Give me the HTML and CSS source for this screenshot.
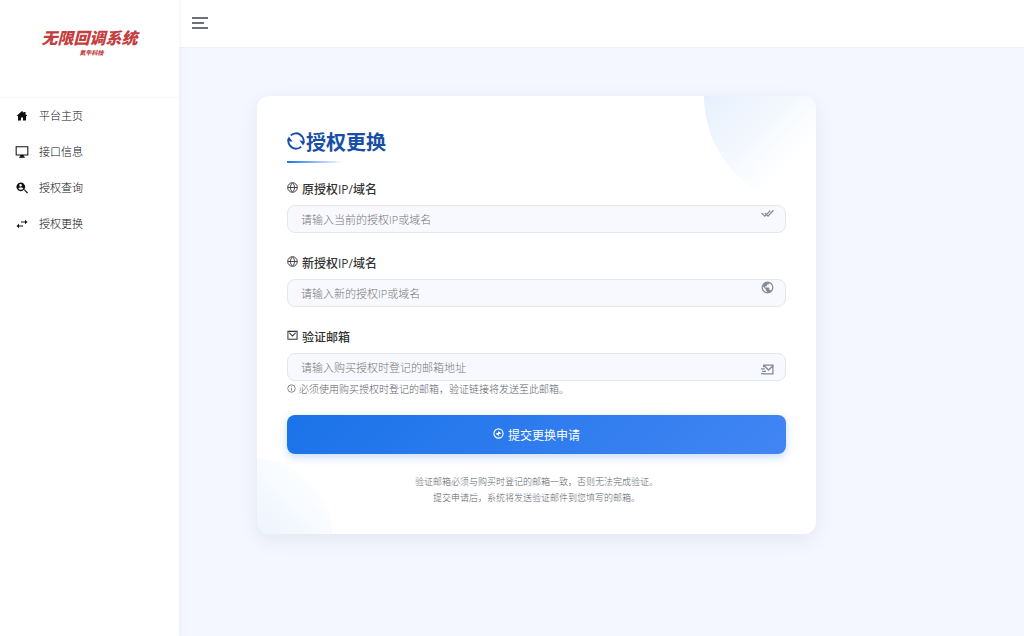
FILE: index.html
```html
<!DOCTYPE html>
<html lang="zh-CN">
<head>
<meta charset="utf-8">
<meta name="viewport" content="width=device-width, initial-scale=1">
<title>授权更换</title>
<link rel="stylesheet" href="styles.css">
</head>
<body>
<div class="app">
  <aside class="sidebar">
    <div class="brand">
      <span class="brand-name">无限回调系统</span>
      <span class="brand-sub">氦午科技</span>
    </div>
    <nav class="menu">
      <a class="menu-item" href="#home"><svg class="menu-icon" viewBox="0 0 24 24"><path fill="currentColor" d="M12 2 1 12h3v9h6v-6h4v6h6v-9h3L19 8.300V4h-3v1.600z"/></svg>平台主页</a>
      <a class="menu-item" href="#api"><svg class="menu-icon wide" viewBox="0 0 24 24"><path fill="none" stroke="currentColor" stroke-width="1.800" d="M2 3h20v14H2zM7 21h10"/><path fill="currentColor" d="M9 17h6v4H9z"/></svg>接口信息</a>
      <a class="menu-item" href="#query"><svg class="menu-icon" viewBox="1 1 21 21"><path fill="currentColor" fill-rule="evenodd" d="M9.500 2a7.500 7.500 0 0 1 6.100 11.800l.5.600h.8L22 19.500 20.500 21l-5.100-5v-.8l-.6-.6A7.500 7.500 0 1 1 9.500 2zm0 2.500A2.300 2.300 0 1 0 9.500 9a2.300 2.300 0 0 0 0-4.500zm0 6c-2 0-3.500.7-4.300 1.800a5.300 5.300 0 0 0 8.600 0c-.8-1.100-2.300-1.800-4.300-1.800z"/></svg>授权查询</a>
      <a class="menu-item" href="#change"><svg class="menu-icon" viewBox="0 0 24 24"><path fill="currentColor" d="M23 8l-5-4.500V7h-8v2h8v3.500zM1 16l5 4.500V17h8v-2H6v-3.500z"/></svg>授权更换</a>
    </nav>
  </aside>
  <div class="page">
    <header class="topbar">
      <button class="toggle" type="button" aria-label="切换菜单"><svg class="toggle-icon" viewBox="0 0 16 12"><path fill="none" stroke="currentColor" stroke-width="1.300" d="M0 1h16M0 6h12M0 11h16"/></svg></button>
    </header>
    <main class="content">
      <form class="card">
        <h1 class="title"><svg class="title-icon" viewBox="0 0 24 24"><path fill="none" stroke="currentColor" stroke-width="2.600" d="M5 4.500A10.200 10.200 0 0 1 21.500 15.500M19 19.500A10.200 10.200 0 0 1 2.500 8.500"/><path fill="currentColor" d="M16.500 11l7.500 1.500-2.500 5.500zM7.500 13L0 11.500 2.500 6z"/></svg>授权更换</h1>
        <div class="field">
          <label class="label" for="old"><svg class="label-icon" viewBox="0 0 24 24"><path fill="none" stroke="currentColor" stroke-width="2" d="M12 1.500a10.500 10.500 0 1 0 0 21 10.500 10.500 0 0 0 0-21zM12 2c-6 5-6 15 0 20M12 2c6 5 6 15 0 20M2 12h20"/></svg>原授权IP/域名</label>
          <div class="control">
            <input class="input" id="old" type="text" placeholder="请输入当前的授权IP或域名">
            <svg class="input-icon raised" viewBox="0 0 24 24"><path fill="none" stroke="currentColor" stroke-width="2.200" d="M1 11l6 6L17 7M7 11l6 6L23 6"/></svg>
          </div>
        </div>
        <div class="field">
          <label class="label" for="new"><svg class="label-icon" viewBox="0 0 24 24"><path fill="none" stroke="currentColor" stroke-width="2" d="M12 1.500a10.500 10.500 0 1 0 0 21 10.500 10.500 0 0 0 0-21zM12 2c-6 5-6 15 0 20M12 2c6 5 6 15 0 20M2 12h20"/></svg>新授权IP/域名</label>
          <div class="control">
            <input class="input" id="new" type="text" placeholder="请输入新的授权IP或域名">
            <svg class="input-icon raised" viewBox="1 1 22 22"><circle cx="12" cy="12" r="9" fill="none" stroke="currentColor" stroke-width="2"/><path fill="currentColor" d="M15 3v2a2 2 0 0 1-2 2h-2v2a1 1 0 0 1-1 1H8v2h6a1 1 0 0 1 1 1v3h1a2 2 0 0 1 1.900 1.400L16 20l-5 1v-3a2 2 0 0 1-2-2v-1l-5-5 3-5 5-2z"/></svg>
          </div>
        </div>
        <div class="field">
          <label class="label" for="mail"><svg class="label-icon" viewBox="0 0 24 24"><path fill="none" stroke="currentColor" stroke-width="2.200" d="M2 3h20v17H2zM5 6l7 7 7-7"/></svg>验证邮箱</label>
          <div class="control">
            <input class="input" id="mail" type="email" placeholder="请输入购买授权时登记的邮箱地址">
            <svg class="input-icon lowered" viewBox="0 0 24 24"><path fill="none" stroke="currentColor" stroke-width="2.400" d="M5 8V4h17v16H5v-1M6 5l8 8 8-8M0 11h7M2 15.500h7M0 19.500h6"/></svg>
          </div>
          <p class="hint"><svg class="hint-icon" viewBox="0 0 24 24"><circle cx="12" cy="12" r="10" fill="none" stroke="currentColor" stroke-width="2"/><path stroke="currentColor" stroke-width="2" d="M12 6v2M12 10v8"/></svg>必须使用购买授权时登记的邮箱，验证链接将发送至此邮箱。</p>
        </div>
        <button class="submit" type="submit"><svg class="submit-icon" viewBox="0 0 24 24"><circle cx="12" cy="12" r="10" fill="none" stroke="currentColor" stroke-width="2.400"/><path fill="currentColor" d="M12 5v3h1a4 4 0 0 1 4 4v1h-4v2l-2 4v-3a4 4 0 0 1-4-4v-1h4V9z"/></svg>提交更换申请</button>
        <p class="note">验证邮箱必须与购买时登记的邮箱一致，否则无法完成验证。<br>提交申请后，系统将发送验证邮件到您填写的邮箱。</p>
      </form>
    </main>
  </div>
</div>
</body>
</html>
```
FILE: styles.css
```css
* {
  box-sizing: border-box;
}

body {
  margin: 0;
  font-family: "Open Sans", "Noto Sans CJK SC", sans-serif;
  font-size: 12px;
  color: #333;
  background: #f4f7ff;
}

svg {
  display: block;
  flex: none;
}

.app {
  display: flex;
  min-height: 100vh;
}

.sidebar {
  flex: none;
  width: 179px;
  background: #fff;
  box-shadow: 0 0 4px rgba(60, 80, 130, 0.1);
  z-index: 1;
}

.brand {
  display: flex;
  flex-direction: column;
  align-items: center;
  height: 98px;
  padding-top: 27px;
  border-bottom: 1px solid #f7f7f7;
  color: #c33e3e;
  font-family: "Noto Sans CJK SC", sans-serif;
  font-style: italic;
  font-weight: 900;
}

.brand-name {
  font-size: 16px;
  line-height: 21px;
}

.brand-sub {
  padding-left: 4px;
  font-size: 6px;
  line-height: 10px;
}

.menu-item {
  display: flex;
  align-items: center;
  height: 36px;
  padding-left: 16px;
  gap: 11px;
  font-size: 11px;
  font-weight: 300;
  line-height: 16px;
  color: #111;
  text-decoration: none;
}

.menu-icon {
  width: 12px;
  height: 12px;
}

.menu-icon.wide {
  width: 14px;
  height: 14px;
  margin: 0 -1px;
}

.page {
  flex: 1;
  min-width: 0;
}

.topbar {
  display: flex;
  align-items: center;
  height: 47px;
  padding: 0 13px 2px;
  background: #fff;
  box-shadow: 0 0 2px rgba(60, 80, 130, 0.1);
}

.toggle {
  padding: 0;
  border: 0;
  background: none;
  color: #3d4350;
}

.toggle-icon {
  width: 16px;
  height: 12px;
}

.content {
  padding: 49px 24px 49px 78px;
}

.card {
  position: relative;
  overflow: hidden;
  max-width: 559px;
  padding: 32px 30px 28px;
  border-radius: 12px;
  background: #fff;
  box-shadow: 0 6px 20px rgba(20, 30, 60, 0.07);
}

.card::before,
.card::after {
  content: "";
  position: absolute;
}

.card::before {
  top: 0;
  right: 0;
  width: 112px;
  height: 112px;
  border-radius: 0 0 0 100%;
  background: linear-gradient(135deg, rgba(26, 115, 232, 0.11), transparent 70%);
}

.card::after {
  bottom: 0;
  left: 0;
  width: 75px;
  height: 75px;
  border-radius: 0 100% 0 0;
  background: linear-gradient(45deg, rgba(26, 115, 232, 0.08), transparent 80%);
}

.title {
  display: flex;
  align-items: center;
  width: max-content;
  margin: 0 0 16px;
  padding-bottom: 5px;
  font-size: 20px;
  line-height: 30px;
  font-weight: 700;
  color: #174ea6;
  background: linear-gradient(90deg, #1a73e8, transparent) left bottom / 56px 2px no-repeat;
}

.title-icon {
  width: 18px;
  height: 18px;
  margin: 0 1px 5px 0;
}

.field {
  margin-bottom: 20px;
}

.field:last-of-type {
  margin-bottom: 18px;
}

.label {
  display: flex;
  align-items: center;
  gap: 4px;
  height: 20px;
  margin-bottom: 6px;
  font-size: 12px;
  font-weight: 500;
}

.label-icon {
  width: 11px;
  height: 11px;
  margin-bottom: 4px;
}

.control {
  position: relative;
}

.input {
  display: block;
  width: 100%;
  height: 28px;
  padding: 0 13px;
  border: 1px solid #e4e6ea;
  border-radius: 8px;
  background: #f8f9fe;
  font-family: inherit;
  font-size: 11px;
  font-weight: 300;
  color: #333;
}

.input::placeholder {
  color: #757575;
  opacity: 1;
}

.input-icon {
  position: absolute;
  right: 12px;
  width: 13px;
  height: 13px;
  color: #858a91;
}

.raised {
  top: 2px;
}

.lowered {
  top: 10px;
}

.hint {
  display: flex;
  align-items: center;
  gap: 3px;
  margin: 0;
  font-size: 10px;
  line-height: 16px;
  font-weight: 300;
  color: #59626a;
}

.hint-icon {
  width: 9px;
  height: 9px;
  margin-bottom: 2px;
}

.submit {
  display: flex;
  align-items: center;
  justify-content: center;
  gap: 4px;
  width: 100%;
  height: 39px;
  padding: 0;
  border: 0;
  border-radius: 8px;
  font-family: inherit;
  font-size: 12px;
  font-weight: 400;
  color: #fff;
  background: linear-gradient(135deg, #1a73e8, #4285f4);
  box-shadow: 0 3px 8px rgba(26, 115, 232, 0.25);
}

.submit-icon {
  width: 11px;
  height: 11px;
  margin-bottom: 3px;
}

.note {
  margin: 20px 0 0;
  font-size: 9px;
  line-height: 16px;
  font-weight: 300;
  text-align: center;
  color: #59626a;
}
```
